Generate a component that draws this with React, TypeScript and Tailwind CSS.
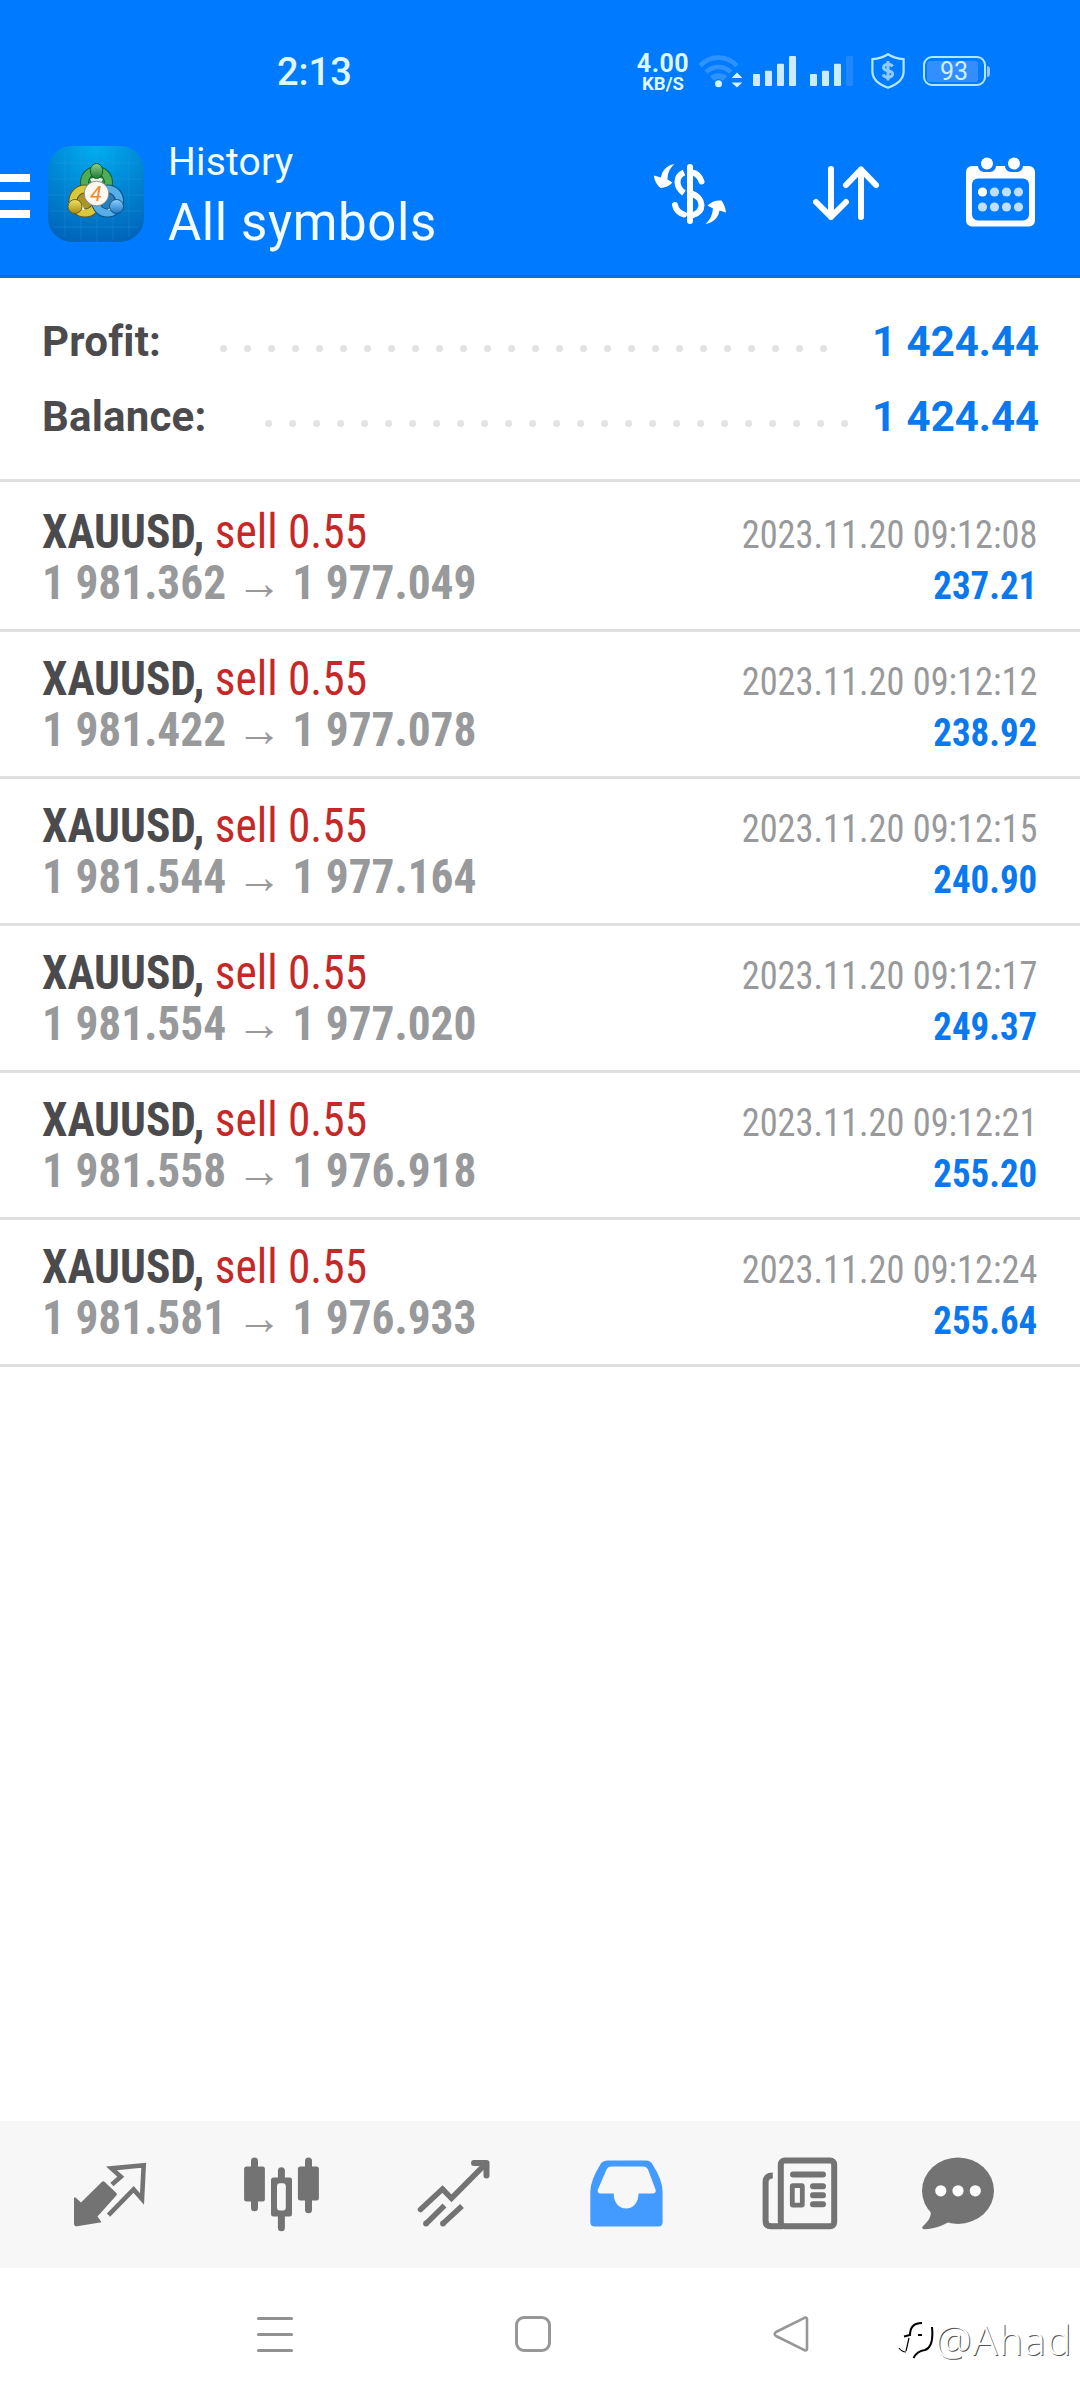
import React from 'react';

interface Deal {
  open: string;
  close: string;
  time: string;
  profit: string;
}

const deals: Deal[] = [
  { open: '1 981.362', close: '1 977.049', time: '2023.11.20 09:12:08', profit: '237.21' },
  { open: '1 981.422', close: '1 977.078', time: '2023.11.20 09:12:12', profit: '238.92' },
  { open: '1 981.544', close: '1 977.164', time: '2023.11.20 09:12:15', profit: '240.90' },
  { open: '1 981.554', close: '1 977.020', time: '2023.11.20 09:12:17', profit: '249.37' },
  { open: '1 981.558', close: '1 976.918', time: '2023.11.20 09:12:21', profit: '255.20' },
  { open: '1 981.581', close: '1 976.933', time: '2023.11.20 09:12:24', profit: '255.64' },
];

const WifiIcon = () => (
  <svg width="46" height="36" viewBox="0 0 46 36" fill="none">
    <g stroke="#2f93ff" strokeWidth="4.6">
      <path d="M2.2 12.6A25 25 0 0 1 38.8 12.6" />
      <path d="M8.2 19.2A17 17 0 0 1 32.8 19.2" />
    </g>
    <path d="M12 23.6A12 12 0 0 1 29 23.6L25 28A6 6 0 0 0 16 28Z" fill="#2f93ff" />
    <circle cx="20.5" cy="30.7" r="3.5" fill="#d6f3ff" />
    <path d="M39 19.6L44.4 25H33.6ZM39 34.6L44.4 29.4H33.6Z" fill="#d6f3ff" />
  </svg>
);

const SignalIcon = ({ weak = false }: { weak?: boolean }) => (
  <svg width="43" height="30" viewBox="0 0 43 30" fill="#cdebff">
    <rect y="18" width="7" height="12" rx="1" />
    <rect x="12" y="14.7" width="7" height="15.3" rx="1" />
    <rect x="24" y="7.7" width="7" height="22.3" rx="1" />
    <rect x="36" width="7" height="30" rx="1" fill={weak ? '#1f88ff' : '#cdebff'} />
  </svg>
);

const ShieldIcon = () => (
  <svg width="34" height="36" viewBox="0 0 34 36" fill="none">
    <path
      d="M17 1.2C21.5 4 26.5 5.6 32.6 6.2V18.5C32.6 26 26 31.5 17 34.8C8 31.5 1.4 26 1.4 18.5V6.2C7.5 5.6 12.5 4 17 1.2Z"
      stroke="#b5e6ff"
      strokeWidth="2.2"
    />
    <path
      d="M21.5 13.5C20.5 11.5 18.5 11.2 17 11.2C14.5 11.2 12.5 12.5 12.5 14.5C12.5 19 21.7 16.5 21.7 21C21.7 23 19.5 24.3 17 24.3C14.5 24.3 12.8 23.3 12.2 21.5M17 8V27.5"
      stroke="#8fcbff"
      strokeWidth="3"
    />
  </svg>
);

const Battery = () => (
  <div className="flex items-center gap-px">
    <div className="flex h-[30px] w-[63px] items-center rounded-[9px] border-2 border-[#b5e6ff] px-[2px]">
      <div className="flex h-[21px] w-[51px] items-center justify-center rounded-[3px] bg-[#338fff] pl-[3px] text-[25px] leading-none text-[#d0f0ff]">
        93
      </div>
    </div>
    <div className="h-[11px] w-[3px] rounded-r-sm bg-[#8fcbff]" />
  </div>
);

const AppLogo = () => (
  <svg width="96" height="96" viewBox="0 0 96 96">
    <defs>
      <radialGradient id="tile" cx="0.5" cy="0" r="1.05">
        <stop offset="0" stopColor="#00aef0" />
        <stop offset="0.5" stopColor="#0086d4" />
        <stop offset="1" stopColor="#0063b8" />
      </radialGradient>
      <linearGradient id="green" x1="0" y1="0" x2="0" y2="1">
        <stop offset="0" stopColor="#8fd08a" />
        <stop offset="1" stopColor="#1e7d32" />
      </linearGradient>
      <linearGradient id="gold" x1="0" y1="0" x2="0" y2="1">
        <stop offset="0" stopColor="#f3e36a" />
        <stop offset="1" stopColor="#a88b14" />
      </linearGradient>
      <linearGradient id="sky" x1="0" y1="0" x2="0" y2="1">
        <stop offset="0" stopColor="#8ed2fb" />
        <stop offset="1" stopColor="#1c78c4" />
      </linearGradient>
    </defs>
    <rect width="96" height="96" rx="24" fill="url(#tile)" />
    <path
      d="M17 5V91M33 2V94M49 0V96M65 2V94M81 5V91M5 17H91M2 33H94M0 49H96M2 65H94M5 81H91"
      stroke="#3aa4e8"
      strokeOpacity="0.3"
      strokeWidth="0.8"
    />
    <circle cx="48.5" cy="36.5" r="12" fill="#2f8f45" stroke="#0d5a35" strokeWidth="9" />
    <circle cx="48.5" cy="36.5" r="12" fill="none" stroke="#4fae55" strokeWidth="7" />
    <circle cx="37" cy="55" r="12" fill="#a8962a" stroke="#5d5a1c" strokeWidth="9" />
    <circle cx="37" cy="55" r="12" fill="none" stroke="#d8c83c" strokeWidth="7" />
    <circle cx="59.5" cy="55" r="12" fill="#2a7cba" stroke="#0e4f86" strokeWidth="9" />
    <circle cx="59.5" cy="55" r="12" fill="none" stroke="#55aee8" strokeWidth="7" />
    <path d="M42 33L48.5 31L55 33L53 37H44ZM33 57L37 64L32 64ZM64 57L60 64L65 64Z" fill="#e9f3ec" />
    <ellipse cx="48.5" cy="25" rx="6.3" ry="7.5" fill="url(#green)" stroke="#14602c" />
    <circle cx="27" cy="60.5" r="7" fill="url(#gold)" stroke="#6d5f14" />
    <circle cx="68.5" cy="60.5" r="7" fill="url(#sky)" stroke="#0e4f86" />
    <circle cx="48.5" cy="47.5" r="12.3" fill="#fdf9f2" stroke="#777c78" strokeWidth="0.8" />
    <text x="48" y="54.8" textAnchor="middle" fontFamily="Roboto, sans-serif" fontSize="21" fontStyle="italic" fill="#f08a2c">
      4
    </text>
  </svg>
);

const CurrencyIcon = () => (
  <svg width="72" height="60" viewBox="0 0 72 60" fill="none">
    <path d="M20.5 0C12 1.5 8 7 7 13.5L0 11.5C0 16 3 21 6.5 24C11 23.5 15.5 22 18.5 18.5L13.5 15.5C13.5 9 16 4 20.5 0Z" fill="#fff" />
    <path d="M51.5 60C60 58.5 64.5 53 65.5 46.5L72 48.5C71.5 44 70 40 67.5 36.5C62 36 57 38 53.5 41.5L59 44.5C58.5 51 56 56 51.5 60Z" fill="#fff" />
    <g stroke="#fff" strokeWidth="6">
      <path d="M36 3V57" strokeLinecap="round" />
      <path d="M30 8.5C25.5 10.5 23.5 13.5 23.5 18C23.5 23 26.5 26.5 30 29" />
      <path d="M38 8.5C43 9.5 46 12.5 47.5 17.5" strokeLinecap="round" />
      <path d="M36 28.5C44.5 32 47.5 36 47.5 41C47.5 46 44.5 49.5 38 51.5" />
      <path d="M30 50.5C25 49 22 46 21 41" strokeLinecap="round" />
    </g>
  </svg>
);

const SortIcon = () => (
  <svg width="66" height="56" viewBox="0 0 66 56" fill="none" stroke="#fff" strokeWidth="6" strokeLinecap="round" strokeLinejoin="round">
    <path d="M18 3V51M3 36L18 51L33 36" />
    <path d="M48 51V3.5M33 19L48 3.5L63 19" />
  </svg>
);

const CalendarIcon = () => (
  <svg width="69" height="70" viewBox="0 0 69 70">
    <rect y="9" width="69" height="60.5" rx="6" fill="#fff" />
    <path d="M12 6h18v3a6 6 0 0 1-6 6h-6a6 6 0 0 1-6-6ZM39 6h18v3a6 6 0 0 1-6 6h-6a6 6 0 0 1-6-6Z" fill="#007aff" />
    <circle cx="21" cy="6.5" r="6" fill="#fff" />
    <circle cx="48" cy="6.5" r="6" fill="#fff" />
    <rect x="6" y="21.5" width="57" height="42" rx="6" fill="#007aff" />
    {[16.5, 28.5, 40.5, 52.5].map((x) => (
      <React.Fragment key={x}>
        <circle cx={x} cy="35" r="4.6" fill={x === 16.5 ? '#fff' : '#c0dfff'} />
        <circle cx={x} cy="50" r="4.6" fill="#c0dfff" />
      </React.Fragment>
    ))}
  </svg>
);

const QuotesIcon = () => (
  <svg width="90" height="90" viewBox="0 0 90 90">
    <path d="M9 47.5L10.5 47.5L16 52.5L36.8 32Q38.3 30.5 39.8 32L51.3 43Q52.5 44.3 51.3 45.6L32.5 66.5L36.6 72.2L12 76.3Q9 76.5 9 73.5Z" fill="#737373" />
    <path d="M46.9 34.5L55.8 26.7L46.5 18.4L78.7 15.3L77 49L68.6 39.5L43.5 65.2" fill="none" stroke="#737373" strokeWidth="4.6" />
  </svg>
);

const ChartIcon = () => (
  <svg width="90" height="90" viewBox="0 0 90 90" fill="#737373">
    <rect x="7.1" y="16.5" width="20.8" height="35" rx="2.5" />
    <rect x="14" y="7.5" width="7" height="53.7" rx="3.5" />
    <rect x="34" y="27.5" width="21" height="39" rx="2.5" />
    <rect x="40.9" y="17.2" width="7" height="64" rx="3.5" />
    <rect x="40" y="33.2" width="8.8" height="27.3" rx="3" fill="#f7f7f7" />
    <rect x="60.9" y="16.5" width="21" height="34" rx="2.5" />
    <rect x="68" y="7.5" width="7" height="55.7" rx="3.5" />
  </svg>
);

const TradeIcon = () => (
  <svg width="90" height="90" viewBox="0 0 90 90" fill="none" stroke="#737373" strokeWidth="5.5">
    <path d="M11.5 59.5L33.5 39L42.5 48.3L76 14.5" strokeLinecap="round" />
    <path d="M65 13H77.5V25.5" strokeWidth="6" strokeLinecap="round" strokeLinejoin="round" />
    <path d="M35.5 55.5L17 73.8M53 56L33.8 73.8" />
    <circle cx="17" cy="73.5" r="1.4" strokeWidth="3" />
    <circle cx="34" cy="73.5" r="1.4" strokeWidth="3" />
  </svg>
);

const HistoryIcon = () => (
  <svg width="90" height="90" viewBox="0 0 90 90">
    <path
      fillRule="evenodd"
      d="M27 10.5H65Q69.5 10.5 71.3 14Q81.6 30 81.6 42V72Q81.6 76.5 77 76.5H14Q9.3 76.5 9.3 72V42Q9.5 30 19.6 14Q21.5 10.5 27 10.5ZM30 16.5Q27 16.5 25.8 19L16.9 39.5Q16 43.5 19.5 43.5H32.7C32.7 52.5 38 58.5 45.1 58.5C52.2 58.5 57.5 52.5 57.5 43.5H71.5Q75.5 43.5 74.5 39.5L67 19.5Q65.5 16.5 62 16.5Z"
      fill="#439bff"
    />
  </svg>
);

const NewsIcon = () => (
  <svg width="90" height="90" viewBox="0 0 90 90" fill="none" stroke="#737373" strokeWidth="6">
    <path d="M19.8 25.5Q12.6 25.5 12.6 32V71Q12.6 76.3 18 76.3H30" />
    <rect x="27.8" y="10.5" width="53.4" height="65.8" rx="4" />
    <rect x="39.3" y="35.6" width="10" height="19.5" rx="0.5" strokeWidth="4.8" />
    <path d="M40 24.5H70M60 36.2H70M60 45.2H70M60 54.3H70" strokeLinecap="round" />
  </svg>
);

const MessagesIcon = () => (
  <svg width="90" height="90" viewBox="0 0 90 90">
    <ellipse cx="45" cy="40.7" rx="36" ry="33.2" fill="#737373" />
    <path d="M17 60C19.5 65 15.5 71.5 10 76C8.5 78 9.5 79.2 12 79.2C21 79 29 76 35.5 72.3Z" fill="#737373" />
    <circle cx="27.8" cy="40.8" r="5.6" fill="#fff" />
    <circle cx="45" cy="40.8" r="5.6" fill="#fff" />
    <circle cx="62.3" cy="40.8" r="5.6" fill="#fff" />
  </svg>
);

const StatusBar = () => (
  <div className="flex h-[142px] items-start pt-[53px] text-[#dff6ff]">
    <div className="ml-[277px] w-[360px] text-[38px] leading-[38px] font-medium">2:13</div>
    <div className="flex w-[52px] flex-col items-center pt-0.5">
      <span className="text-[25px] leading-[18px] font-bold tracking-[0.5px]">4.00</span>
      <span className="mt-[4px] text-[18.5px] leading-[14px] font-bold">KB/S</span>
    </div>
    <div className="ml-[9px]"><WifiIcon /></div>
    <div className="mt-[3px] ml-[9px]"><SignalIcon /></div>
    <div className="mt-[3px] ml-[14px]"><SignalIcon weak /></div>
    <div className="ml-[18px]"><ShieldIcon /></div>
    <div className="mt-[3px] ml-[18px]"><Battery /></div>
  </div>
);

const Header = () => (
  <div className="flex h-[133px] items-start">
    <div className="mt-8 flex w-[30px] flex-col gap-[10px]">
      <div className="h-2 bg-white" />
      <div className="h-2 bg-white" />
      <div className="h-2 bg-white" />
    </div>
    <div className="mt-1 ml-[18px]"><AppLogo /></div>
    <div className="ml-6 w-[486px] text-[#f2fcff]">
      <div className="-mt-[3px] text-[39px] leading-[46px] tracking-[0.2px]">History</div>
      <div className="mt-[8px] text-[51px] leading-[60px] tracking-[0.6px]">All symbols</div>
    </div>
    <div className="mt-[22px]"><CurrencyIcon /></div>
    <div className="mt-6 ml-[87px]"><SortIcon /></div>
    <div className="mt-[15px] ml-[87px]"><CalendarIcon /></div>
  </div>
);

interface SummaryRowProps {
  label: string;
  value: string;
  dots: number;
  end: string;
}

const SummaryRow: React.FC<SummaryRowProps> = ({ label, value, dots, end }) => (
  <div className="flex h-[75px] items-center">
    <span className="flex-1 pt-px text-[42px] font-bold tracking-[0.2px] text-[#4b4b4d]">{label}</span>
    <div className={`flex gap-[17px] pt-4 ${end}`}>
      {Array.from({ length: dots }, (_, i) => (
        <div key={i} className="size-[7px] rounded-full bg-[#e3e3e3]" />
      ))}
    </div>
    <span className="w-[166px] pt-px text-right text-[42px] font-bold whitespace-nowrap text-[#0a78ee]">{value}</span>
  </div>
);

const DealRow: React.FC<{ deal: Deal }> = ({ deal }) => (
  <div className="flex h-[147px] justify-between border-b-[3px] border-[#e0e0e0] pr-[43px] pl-[42px] font-['Roboto_Condensed',Roboto,sans-serif] [font-stretch:75%]">
    <div className="origin-left scale-x-[0.945] pt-[21px] whitespace-nowrap">
      <div className="flex gap-[11px] text-[48px] leading-[51px]">
        <span className="font-bold text-[#4b4b4d]">XAUUSD,</span>
        <span className="text-[#c62828]">sell 0.55</span>
      </div>
      <div className="text-[48px] leading-[51px] font-bold text-[#97999b]">
        {deal.open} → {deal.close}
      </div>
    </div>
    <div className="flex flex-col items-end pt-[21px] whitespace-nowrap">
      <div className="origin-right scale-x-[0.92] text-[39.5px] leading-[57px] text-[#97999b]">{deal.time}</div>
      <div className="origin-right scale-x-[0.935] text-[39.5px] leading-[46px] font-bold text-[#0a78ee]">{deal.profit}</div>
    </div>
  </div>
);

const TabBar = () => (
  <div className="flex h-[147px] items-center bg-[#f7f7f7] pl-6">
    {[QuotesIcon, ChartIcon, TradeIcon, HistoryIcon, NewsIcon].map((Icon, i) => (
      <div key={i} className="flex w-[172px] justify-center">
        <Icon />
      </div>
    ))}
    <div className="flex w-[148px] justify-center">
      <MessagesIcon />
    </div>
  </div>
);

const SystemNav = () => (
  <div className="flex h-[132px] items-center bg-white">
    <div className="ml-[257px] flex w-9 flex-col gap-[13px]">
      <div className="h-[3px] rounded-full bg-[#919191]" />
      <div className="h-[3px] rounded-full bg-[#919191]" />
      <div className="h-[3px] rounded-full bg-[#919191]" />
    </div>
    <div className="ml-[222px] size-9 rounded-[9px] border-[3px] border-[#979797]" />
    <svg className="ml-[222px]" width="36" height="36" viewBox="0 0 36 36" fill="none" stroke="#979797" strokeWidth="2.6" strokeLinejoin="round">
      <path d="M31.5 1.8Q34 .8 34 3.5V32.5Q34 35.2 31.5 34.2L3 20Q.3 18 3 16Z" />
    </svg>
    <div className="mt-[11px] ml-[89px] flex items-center">
      <svg width="36" height="38" viewBox="0 0 36 38" fill="none" stroke="#000">
        <path d="M6 15.5Q8 15 12 14Q12 2 24 2" strokeWidth="2" />
        <path d="M34 6Q36 26 27 29Q19 30 15.5 37" strokeWidth="2" />
        <path d="M20 14H24" strokeWidth="2" />
        <path d="M11 17L8 30M1 27Q4 31 8 31" strokeWidth="1.2" />
      </svg>
      <span className="ml-px font-['Noto_Sans',sans-serif] text-[41px] leading-none font-light tracking-[1px] text-white [text-shadow:1px_1px_0_#555]">@Ahad</span>
    </div>
  </div>
);

export default function App() {
  return (
    <div className="flex h-[2400px] w-[1080px] flex-col overflow-hidden bg-white font-[Roboto,sans-serif]">
      <div className="border-b-[3px] border-[#066fe2] bg-[#007aff]">
        <StatusBar />
        <Header />
      </div>
      <div className="h-[204px] border-b-[3px] border-[#e0e0e0] px-[42px] pt-[25px]">
        <SummaryRow label="Profit:" value="1 424.44" dots={26} end="mr-[45px]" />
        <SummaryRow label="Balance:" value="1 424.44" dots={25} end="mr-[24px]" />
      </div>
      <div className="flex-1 pt-[3px]">
        {deals.map((deal) => (
          <DealRow key={deal.time} deal={deal} />
        ))}
      </div>
      <TabBar />
      <SystemNav />
    </div>
  );
}
